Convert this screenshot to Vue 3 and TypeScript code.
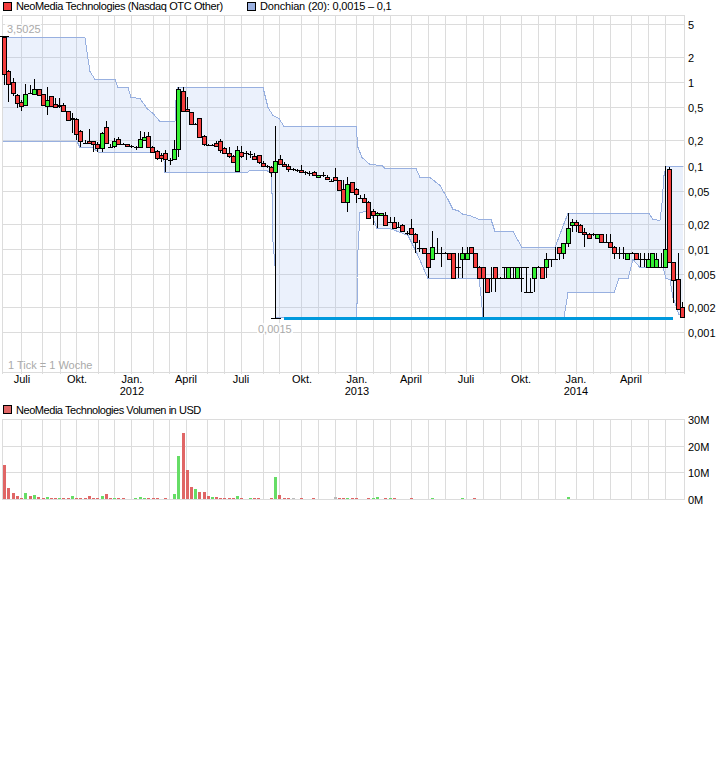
<script setup lang="ts">
// [x, bodyTop, bodyBottom, wickTop, wickBottom, up(1) / down(0)]
type Candle = [number, number, number, number, number, number];
// [x, height, r(ed) / g(reen) / n(eutral)]
type VolBar = [number, number, string];

const vGrid = [
  2, 21, 42, 60, 76, 98, 114, 131, 153, 169, 186, 207, 224, 241, 263, 279, 301, 318, 335, 356, 373,
  390, 411, 428, 445, 466, 483, 500, 521, 538, 555, 576, 593, 610, 631, 648, 665, 684,
];
const priceGrid = [15, 24, 57, 82, 107, 140, 166, 191, 224, 249, 274, 307, 332, 372];
const volGrid = [419, 446, 472, 499];

const priceLabels: [string, number][] = [
  ['5', 24], ['2', 57], ['1', 82], ['0,5', 107], ['0,2', 140], ['0,1', 166], ['0,05', 191],
  ['0,02', 224], ['0,01', 249], ['0,005', 274], ['0,002', 307], ['0,001', 332],
];
const volLabels: [string, number][] = [['30M', 419], ['20M', 446], ['10M', 472], ['0M', 499]];
const months: [string, number][] = [
  ['Juli', 22], ['Okt.', 77], ['Jan.', 132], ['April', 186], ['Juli', 241], ['Okt.', 302],
  ['Jan.', 357], ['April', 411], ['Juli', 466], ['Okt.', 521], ['Jan.', 576], ['April', 631],
];
const years: [string, number][] = [['2012', 132], ['2013', 357], ['2014', 576]];

const upper = [
  [3, 37], [85, 37], [88, 58], [90, 71], [95, 79], [115, 79], [118, 87], [128, 87], [131, 97], [140, 98],
  [147, 108], [153, 113], [160, 121], [175, 121], [176, 100], [178, 87], [263, 87], [268, 107], [273, 115],
  [279, 118], [284, 126], [356, 126], [358, 147], [362, 157], [370, 164], [382, 165], [385, 168], [416, 168],
  [420, 177], [430, 177], [440, 185], [448, 199], [453, 209], [458, 210], [463, 214], [470, 215], [479, 219],
  [491, 219], [495, 231], [513, 231], [518, 240], [522, 247], [555, 247], [564, 223], [568, 213], [649, 213],
  [653, 219], [660, 220], [662, 203], [664, 175], [666, 166], [683, 166],
];
const lower = [
  [3, 141], [77, 141], [80, 147], [92, 147], [99, 152], [158, 152], [164, 160], [165, 172], [247, 172],
  [250, 170], [267, 170], [271, 173], [272, 193], [272, 230], [275, 265], [275, 317], [356, 317], [357, 303],
  [357, 277], [358, 250], [360, 212], [367, 211], [372, 215], [377, 228], [390, 228], [403, 233], [408, 235],
  [417, 253], [428, 278], [479, 278], [481, 295], [483, 317], [564, 317], [568, 292], [614, 292], [619, 278], [628, 278],
  [633, 259], [640, 267], [663, 267], [666, 278], [670, 279], [673, 297], [679, 314], [683, 317],
];
const pts = (list: number[][]) => list.map((p) => `${p[0]},${p[1] + 0.5}`).join(' ');
const upperLine = pts(upper);
const lowerLine = pts(lower);
const bandArea = pts([...upper, ...[...lower].reverse()]);

const candles: Candle[] = [
  [4, 37, 74, 36, 85, 0], [8, 71, 84, 70, 102, 0], [13, 82, 93, 78, 96, 0], [17, 95, 103, 94, 108, 0],
  [21, 102, 106, 100, 111, 0], [25, 94, 105, 84, 106, 1], [30, 93, 93, 85, 94, 0], [34, 89, 94, 79, 95, 1],
  [39, 89, 95, 89, 96, 0], [43, 94, 105, 94, 106, 0], [47, 100, 106, 87, 115, 1], [51, 96, 106, 96, 107, 0],
  [55, 104, 107, 98, 108, 0], [59, 105, 106, 98, 108, 0], [63, 105, 111, 103, 112, 0], [68, 111, 120, 111, 121, 0],
  [72, 118, 119, 113, 133, 0], [76, 119, 134, 118, 140, 0], [80, 131, 141, 130, 147, 0], [85, 143, 143, 140, 144, 0],
  [89, 141, 143, 129, 144, 0], [93, 141, 144, 141, 152, 0], [97, 144, 148, 142, 152, 0], [102, 133, 148, 132, 152, 1],
  [106, 127, 143, 121, 144, 0], [110, 147, 147, 144, 148, 0], [114, 141, 146, 138, 148, 1], [118, 139, 144, 137, 145, 0],
  [123, 144, 144, 143, 145, 0], [127, 144, 146, 144, 147, 0], [131, 146, 146, 145, 148, 0], [136, 147, 147, 146, 150, 0],
  [140, 139, 147, 131, 148, 1], [144, 137, 140, 132, 141, 1], [148, 136, 147, 132, 148, 0], [152, 147, 152, 146, 153, 0],
  [157, 151, 158, 150, 160, 0], [161, 155, 158, 153, 162, 0], [165, 153, 159, 150, 172, 0], [170, 160, 160, 158, 165, 0],
  [174, 149, 159, 140, 160, 1], [178, 89, 149, 87, 157, 1], [183, 91, 111, 87, 112, 0], [187, 109, 111, 97, 112, 0],
  [191, 112, 124, 112, 125, 0], [195, 124, 124, 123, 125, 0], [199, 118, 137, 118, 138, 0], [204, 136, 144, 135, 146, 0],
  [208, 145, 145, 144, 146, 0], [212, 145, 145, 144, 146, 0], [216, 143, 146, 141, 147, 0], [220, 141, 150, 139, 153, 0],
  [224, 148, 153, 147, 154, 0], [229, 153, 156, 147, 158, 0], [233, 156, 162, 155, 163, 0], [237, 150, 171, 146, 172, 1],
  [241, 152, 156, 146, 158, 0], [246, 153, 153, 151, 160, 0], [250, 154, 154, 151, 158, 0], [254, 156, 159, 153, 160, 0],
  [259, 155, 162, 155, 164, 0], [263, 163, 166, 161, 167, 0], [267, 166, 166, 165, 168, 0], [271, 167, 172, 166, 177, 0],
  [275, 161, 172, 126, 318, 1], [280, 159, 164, 155, 165, 0], [284, 164, 166, 162, 167, 0], [288, 166, 169, 164, 172, 0],
  [293, 169, 169, 168, 171, 0], [297, 170, 170, 169, 172, 0], [301, 170, 172, 165, 173, 0], [305, 172, 172, 171, 175, 0],
  [309, 173, 173, 171, 176, 0], [314, 172, 175, 171, 176, 0], [318, 175, 177, 175, 177, 1], [323, 175, 175, 172, 177, 0],
  [327, 177, 179, 175, 180, 0], [331, 181, 181, 179, 182, 0], [335, 177, 180, 168, 181, 0], [339, 180, 190, 180, 191, 0],
  [343, 189, 202, 180, 203, 0], [347, 184, 202, 177, 212, 1], [352, 182, 192, 182, 193, 0], [356, 189, 194, 188, 203, 0],
  [360, 198, 198, 195, 199, 0], [364, 198, 202, 194, 203, 0], [368, 202, 218, 201, 219, 0], [373, 211, 215, 209, 225, 0],
  [377, 213, 215, 212, 228, 1], [381, 213, 215, 213, 216, 1], [385, 215, 225, 212, 226, 0], [390, 222, 222, 217, 223, 0],
  [394, 222, 228, 217, 229, 0], [398, 227, 227, 222, 228, 0], [402, 225, 231, 224, 232, 0], [407, 233, 233, 231, 235, 0],
  [411, 228, 234, 219, 235, 0], [415, 234, 242, 233, 253, 0], [419, 248, 248, 240, 252, 0], [424, 248, 253, 248, 254, 0],
  [428, 253, 267, 253, 278, 0], [432, 247, 259, 231, 260, 1], [437, 253, 253, 238, 254, 0], [441, 253, 253, 247, 267, 0],
  [445, 253, 253, 252, 254, 0], [449, 253, 259, 253, 260, 0], [453, 253, 278, 253, 279, 0], [458, 267, 267, 253, 278, 0],
  [462, 253, 259, 247, 278, 1], [467, 253, 259, 247, 260, 1], [471, 247, 253, 247, 254, 0], [475, 253, 267, 253, 268, 0],
  [479, 267, 278, 266, 279, 0], [483, 267, 278, 267, 317, 0], [487, 278, 292, 278, 293, 0], [491, 278, 278, 267, 292, 0],
  [495, 267, 278, 267, 292, 0], [500, 278, 278, 277, 279, 0], [504, 278, 278, 267, 279, 0], [508, 267, 278, 267, 279, 1],
  [513, 278, 278, 267, 279, 0], [517, 267, 278, 267, 279, 1], [521, 278, 278, 267, 292, 0], [526, 292, 292, 267, 293, 0],
  [530, 292, 292, 278, 293, 0], [534, 267, 278, 267, 292, 1], [538, 267, 267, 266, 268, 0], [542, 267, 278, 267, 279, 0],
  [546, 259, 267, 253, 278, 1], [551, 259, 259, 259, 267, 0], [555, 259, 259, 247, 260, 0], [559, 247, 253, 247, 260, 0],
  [563, 243, 253, 243, 259, 1], [568, 228, 243, 213, 247, 1], [572, 222, 225, 219, 232, 1], [576, 222, 225, 220, 232, 0],
  [580, 225, 232, 224, 233, 0], [584, 232, 234, 228, 247, 0], [589, 234, 238, 233, 239, 0], [593, 234, 234, 233, 236, 0],
  [597, 234, 238, 234, 239, 1], [601, 234, 242, 234, 243, 0], [606, 242, 242, 234, 243, 0], [610, 242, 247, 234, 248, 0],
  [614, 247, 253, 246, 259, 0], [619, 253, 253, 247, 259, 0], [623, 253, 253, 247, 259, 0], [627, 253, 259, 253, 260, 1],
  [632, 253, 253, 252, 254, 0], [636, 253, 259, 253, 260, 0], [640, 259, 259, 253, 267, 0], [644, 259, 259, 253, 267, 0],
  [648, 259, 267, 253, 268, 1], [652, 253, 267, 253, 268, 1], [656, 259, 267, 253, 268, 1], [661, 267, 267, 253, 268, 0],
  [665, 249, 267, 166, 268, 1], [669, 169, 262, 167, 263, 0], [673, 262, 280, 262, 303, 0], [678, 279, 309, 253, 310, 0],
  [682, 307, 317, 302, 318, 0],
];

const volumes: VolBar[] = [
  [4, 34, 'r'], [8, 11, 'r'], [13, 6, 'r'], [17, 3, 'r'], [21, 1, 'r'], [25, 6, 'g'], [30, 3, 'r'], [34, 4, 'g'],
  [38, 2, 'r'], [43, 1, 'r'], [47, 2, 'g'], [51, 1, 'r'], [55, 1, 'r'], [59, 1, 'g'], [63, 1, 'r'], [68, 1, 'r'],
  [72, 3, 'g'], [76, 1, 'r'], [80, 1, 'r'], [85, 1, 'r'], [89, 3, 'r'], [93, 1, 'r'], [97, 1, 'r'], [102, 3, 'g'],
  [106, 5, 'r'], [110, 1, 'r'], [114, 1, 'g'], [118, 1, 'r'], [123, 1, 'r'], [135, 1, 'g'], [140, 2, 'g'], [144, 1, 'g'],
  [148, 1, 'r'], [153, 1, 'r'], [157, 1, 'r'], [165, 1, 'r'], [174, 5, 'g'], [178, 43, 'g'], [183, 66, 'r'], [187, 29, 'r'],
  [191, 12, 'r'], [195, 10, 'g'], [199, 7, 'r'], [204, 7, 'r'], [208, 3, 'r'], [212, 2, 'g'], [216, 2, 'r'], [220, 1, 'r'],
  [224, 1, 'r'], [229, 1, 'r'], [233, 1, 'r'], [237, 3, 'g'], [241, 1, 'r'], [250, 1, 'g'], [254, 1, 'r'], [258, 1, 'r'],
  [271, 1, 'r'], [275, 22, 'g'], [279, 4, 'r'], [284, 1, 'r'], [288, 1, 'r'], [293, 1, 'n'], [301, 1, 'r'], [313, 1, 'r'],
  [335, 2, 'n'], [339, 1, 'r'], [343, 1, 'r'], [347, 1, 'g'], [352, 1, 'r'], [356, 1, 'r'], [368, 1, 'r'], [373, 1, 'g'],
  [377, 2, 'g'], [385, 1, 'r'], [390, 1, 'g'], [394, 1, 'r'], [411, 1, 'r'], [432, 1, 'g'], [462, 1, 'g'], [474, 1, 'r'],
  [568, 2, 'g'],
];
</script>

<template>
  <div class="page">
    <div class="legend">
      <span class="item item-price"><i class="swatch swatch-red"></i>NeoMedia Technologies (Nasdaq OTC Other)</span>
      <span class="item item-band"><i class="swatch swatch-blue"></i>Donchian (20): 0,0015 – 0,1</span>
    </div>

    <svg class="chart" width="726" height="383" viewBox="0 15 726 383">
      <g class="grid">
        <line v-for="y in priceGrid" :key="y" x1="2" x2="685" :y1="y + 0.5" :y2="y + 0.5" />
        <line v-for="x in vGrid" :key="x" :x1="x + 0.5" :x2="x + 0.5" y1="15" y2="374" />
      </g>

      <polygon class="band" :points="bandArea" />
      <polyline class="band-line" :points="upperLine" />
      <polyline class="band-line" :points="lowerLine" />

      <rect class="support" x="284" y="317" width="389" height="3" />

      <line class="wick" x1="0" x2="9" y1="36.5" y2="36.5" />
      <line class="wick" x1="271" x2="281" y1="318.5" y2="318.5" />
      <line class="wick" x1="502" x2="529" y1="267.5" y2="267.5" />
      <line class="wick" x1="502" x2="520" y1="278.5" y2="278.5" />
      <g v-for="c in candles" :key="c[0]">
        <line class="wick" :x1="c[0] + 0.5" :x2="c[0] + 0.5" :y1="c[3]" :y2="c[4]" />
        <rect
          v-if="c[2] > c[1]"
          :class="c[5] ? 'up' : 'down'"
          :x="c[0] - 1.5"
          :y="c[1] + 0.5"
          width="4"
          :height="c[2] - c[1]"
        />
        <line v-else class="wick" :x1="c[0] - 2" :x2="c[0] + 3" :y1="c[1] + 0.5" :y2="c[1] + 0.5" />
      </g>

      <rect class="backing" x="5" y="24" width="36" height="11" />
      <text class="note" x="7" y="33">3,5025</text>
      <rect class="backing" x="257" y="323" width="36" height="11" />
      <text class="note" x="258" y="333">0,0015</text>
      <text class="note" x="8" y="369">1 Tick = 1 Woche</text>

      <text v-for="l in priceLabels" :key="l[0]" class="axis" x="688" :y="l[1] + 5">{{ l[0] }}</text>
      <text v-for="(m, i) in months" :key="i" class="axis mid" :x="m[1]" y="383">{{ m[0] }}</text>
      <text v-for="y in years" :key="y[0]" class="axis mid" :x="y[1]" y="395">{{ y[0] }}</text>
    </svg>

    <div class="legend legend-volume">
      <span class="item item-volume"><i class="swatch swatch-vol"></i>NeoMedia Technologies Volumen in USD</span>
    </div>

    <svg class="chart" width="726" height="92" viewBox="0 413 726 92">
      <g class="grid">
        <line v-for="y in volGrid" :key="y" x1="2" x2="685" :y1="y + 0.5" :y2="y + 0.5" />
        <line v-for="x in vGrid" :key="x" :x1="x + 0.5" :x2="x + 0.5" y1="419" y2="500" />
      </g>
      <rect
        v-for="v in volumes"
        :key="v[0]"
        :class="`vol-${v[2]}`"
        :x="v[0] - 1"
        :y="499 - v[1]"
        width="3"
        :height="v[1]"
      />
      <text v-for="l in volLabels" :key="l[0]" class="axis" x="688" :y="l[1] + 5">{{ l[0] }}</text>
    </svg>
  </div>
</template>

<style>
html,
body {
  background: #fff;
}
</style>

<style scoped>
.page {
  width: 726px;
  height: 773px;
  background: #fff;
  color: #000;
  font-family: "Liberation Sans", Arial, sans-serif;
  font-size: 11px;
  overflow: hidden;
}

.legend {
  display: flex;
  align-items: center;
  box-sizing: border-box;
  height: 15px;
  padding: 0 0 3px 3px;
  line-height: 12px;
  white-space: nowrap;
}

.legend-volume {
  height: 7px;
  margin-top: 8px;
  padding-bottom: 0;
}

.item {
  display: flex;
  align-items: center;
}

.item-price {
  flex: 0 0 244px;
  letter-spacing: -0.39px;
}

.item-band {
  letter-spacing: -0.18px;
}

.item-volume {
  letter-spacing: -0.45px;
}

.swatch {
  flex: none;
  display: block;
  box-sizing: border-box;
  width: 9px;
  height: 9px;
  margin-right: 4px;
  border: 1px solid #000;
}

.swatch-red {
  background: #f33c3c;
}

.swatch-blue {
  background: #9ab0e0;
}

.swatch-vol {
  background: #e06666;
}

.chart {
  display: block;
}

.grid line {
  stroke: #dcdcdc;
  stroke-width: 1;
  shape-rendering: crispEdges;
}

.band {
  fill: #99bbee;
  fill-opacity: 0.2;
  stroke: none;
}

.band-line {
  fill: none;
  stroke: #98b0e0;
  stroke-width: 1;
  shape-rendering: crispEdges;
}

.support {
  fill: #0099dd;
}

.wick {
  stroke: #000;
  stroke-width: 1;
  shape-rendering: crispEdges;
}

.up,
.down {
  stroke: #000;
  stroke-width: 1;
  shape-rendering: crispEdges;
}

.up {
  fill: #33ee33;
}

.down {
  fill: #f33c3c;
}

.vol-r {
  fill: #e06666;
}

.vol-g {
  fill: #66dd66;
}

.vol-n {
  fill: #bbbbbb;
}

.backing {
  fill: #fff;
  fill-opacity: 0.8;
}

.note {
  fill: #aaaaaa;
  font-size: 11px;
}

.axis {
  fill: #000;
  font-size: 11px;
}

.mid {
  text-anchor: middle;
}
</style>
